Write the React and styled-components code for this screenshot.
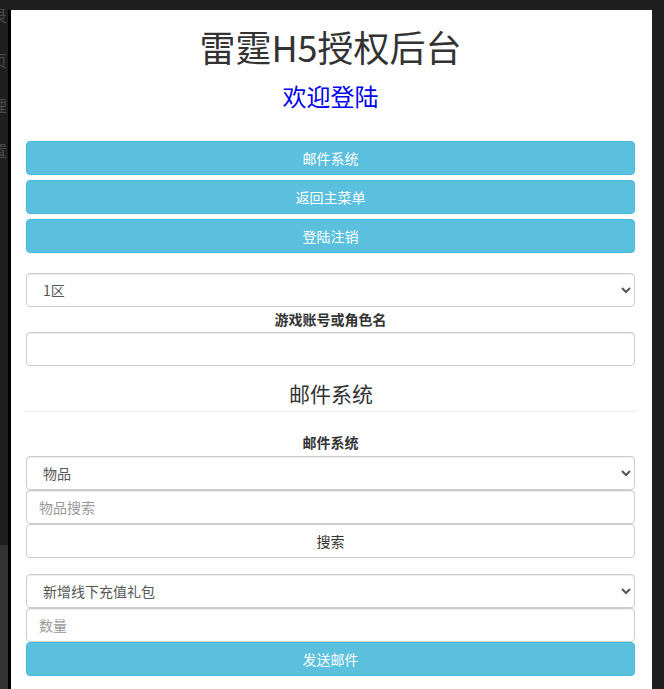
import React from 'react';
import styled, {createGlobalStyle} from 'styled-components';

const Global = createGlobalStyle`
    html, body {
        margin:0;
        padding:0;
        height:100%;
        overflow:hidden;
        background:#1f1f1f;
    }
    body {
        font-family:"Noto Sans CJK SC", "Liberation Sans", sans-serif;
        font-size:14px;
        color:#333;
    }
    * {
        box-sizing:border-box;
    }
`;

const Page = styled.div`
    display:flex;
    height:100vh;
    background:#1f1f1f;
`;

const Gutter = styled.div`
    width:8px;
    flex:none;
    display:flex;
    flex-direction:column;
    overflow:hidden;
`;

const GutterTop = styled.div`
    height:552px;
    margin-top:-7px;
`;

const GutterBottom = styled.div`
    flex:1;
    background:#333;
`;

const GhostText = styled.div`
    width:40px;
    margin-left:-33px;
    text-align:right;
    color:#4a4a4a;
    font-size:16px;
    line-height:45px;
    white-space:nowrap;
`;

const Panel = styled.div`
    width:644px;
    flex:none;
    margin-top:10px;
    background:#fff;
    border-left:3px solid #000;
    padding:0 17px 0 15px;
    display:flex;
    flex-direction:column;
`;

const Title = styled.h1`
    margin:16px 0 0;
    font-size:36px;
    font-weight:400;
    line-height:40px;
    text-align:center;
    color:#333;
`;

const Welcome = styled.h2`
    margin:17px 0 0;
    font-size:24px;
    font-weight:400;
    line-height:26px;
    text-align:center;
    color:#0000ee;
`;

const Btn = styled.button`
    display:block;
    width:100%;
    height:34px;
    margin-top:${p => p.$gap || 0}px;
    padding:0 12px;
    border:1px solid ${p => p.$plain ? '#ccc' : '#46b8da'};
    border-radius:4px;
    background:${p => p.$plain ? '#fff' : '#5bc0de'};
    color:${p => p.$plain ? '#333' : '#fff'};
    font-family:inherit;
    font-size:14px;
    line-height:32px;
    text-align:center;
`;

const Select = styled.select`
    display:block;
    width:100%;
    height:34px;
    margin-top:${p => p.$gap || 0}px;
    padding:0 8px 0 12px;
    border:1px solid #ccc;
    border-radius:4px;
    background:#fff;
    color:#555;
    font-family:inherit;
    font-size:14px;
    box-shadow:inset 0 1px 1px rgba(0,0,0,.075);
`;

const Input = styled.input`
    display:block;
    width:100%;
    height:34px;
    margin-top:${p => p.$gap || 0}px;
    padding:0 12px;
    border:1px solid #ccc;
    border-radius:4px;
    background:#fff;
    color:#555;
    font-family:inherit;
    font-size:14px;
    box-shadow:inset 0 1px 1px rgba(0,0,0,.075);
    &::placeholder {
        color:#999;
    }
`;

const Label = styled.label`
    display:block;
    text-align:center;
    font-weight:700;
    font-size:14px;
    line-height:20px;
    color:#333;
    margin:${p => p.$top || 0}px 0 ${p => p.$bottom || 0}px;
`;

const Section = styled.h3`
    margin:15px -2px 0 -1px;
    padding-bottom:6px;
    border-bottom:1px solid #eee;
    font-size:21px;
    font-weight:400;
    line-height:24px;
    text-align:center;
    color:#333;
`;

export default function App() {
    return (
        <>
            <Global/>
            <Page>
                <Gutter>
                    <GutterTop>
                        <GhostText>登录</GhostText>
                        <GhostText>首页</GhostText>
                        <GhostText>管理</GhostText>
                        <GhostText>设置</GhostText>
                    </GutterTop>
                    <GutterBottom/>
                </Gutter>
                <Panel>
                    <Title>雷霆H5授权后台</Title>
                    <Welcome>欢迎登陆</Welcome>

                    <Btn $gap={32}>邮件系统</Btn>
                    <Btn $gap={5}>返回主菜单</Btn>
                    <Btn $gap={5}>登陆注销</Btn>

                    <Select $gap={20} defaultValue="1">
                        <option value="1">1区</option>
                        <option value="2">2区</option>
                    </Select>
                    <Label $top={2} $bottom={3}>游戏账号或角色名</Label>
                    <Input/>

                    <Section>邮件系统</Section>
                    <Label $top={20} $bottom={4}>邮件系统</Label>
                    <Select defaultValue="item">
                        <option value="item">物品</option>
                    </Select>
                    <Input placeholder="物品搜索"/>
                    <Btn $plain>搜索</Btn>

                    <Select $gap={16} defaultValue="gift">
                        <option value="gift">新增线下充值礼包</option>
                    </Select>
                    <Input placeholder="数量"/>
                    <Btn>发送邮件</Btn>
                </Panel>
            </Page>
        </>
    );
}
